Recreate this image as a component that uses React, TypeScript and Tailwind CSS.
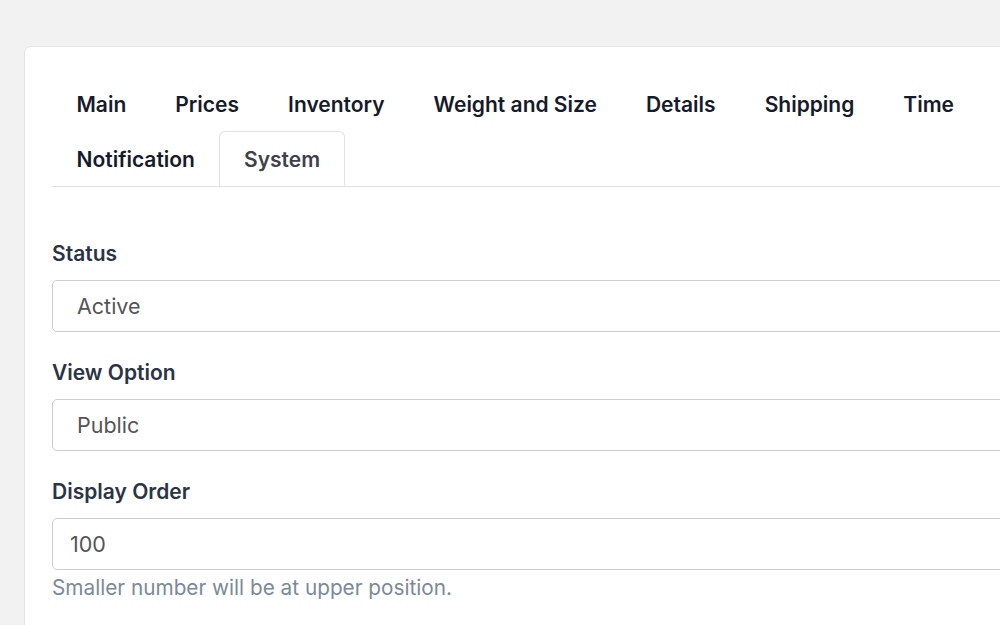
import { FC } from 'react';

const tabs = ['Main', 'Prices', 'Inventory', 'Weight and Size', 'Details', 'Shipping', 'Time', 'Notification', 'System'];

const Field: FC<{ label: string; children: React.ReactNode; help?: string }> = ({ label, children, help }) => (
  <div className="mb-[27px]">
    <label className="block text-[21px] leading-[27px] font-semibold text-[#2b3445] mb-[13px]">{label}</label>
    {children}
    {help && <p className="mt-[4px] text-[20.75px] leading-[27px] text-[#7b8998]">{help}</p>}
  </div>
);

const App: FC = () => {
  return (
    <div
      className="h-[625px] w-[1000px] overflow-hidden bg-[#f2f2f2] pt-[46px] pl-[24px]"
      style={{ fontFamily: 'Inter, "Noto Sans", sans-serif' }}
    >
      <div className="w-[1100px] h-[700px] bg-white border border-[#e4e4e4] rounded-[7px] pt-[29px] px-[27px]">
        <ul className="flex flex-wrap border-b border-[#dee2e6] w-[1000px]">
          {tabs.map((t) => {
            const active = t === 'System';
            return (
              <li key={t} className={active ? '-mb-px' : ''}>
                <span
                  className={
                    'block px-[23.5px] pt-[15px] pb-[13px] text-[21px] leading-[25px] font-semibold border rounded-t-[6px] ' +
                    (active
                      ? 'border-[#dee2e6] border-b-white bg-white text-[#3d4249]'
                      : 'border-transparent text-[#161b2b]')
                  }
                >
                  {t}
                </span>
              </li>
            );
          })}
        </ul>

        <div className="pt-[53px] w-[1000px]">
          <Field label="Status">
            <div className="h-[52px] border border-[#cccccc] rounded-[5px] flex items-center pl-[24px] text-[21.5px] text-[#555555]">
              Active
            </div>
          </Field>
          <Field label="View Option">
            <div className="h-[52px] border border-[#cccccc] rounded-[5px] flex items-center pl-[24px] text-[21.5px] text-[#555555]">
              Public
            </div>
          </Field>
          <Field label="Display Order" help="Smaller number will be at upper position.">
            <input
              defaultValue="100"
              className="block w-full h-[52px] border border-[#cccccc] rounded-[5px] pl-[17px] text-[21.5px] text-[#555555] outline-none"
            />
          </Field>
        </div>
      </div>
    </div>
  );
};

export default App;
